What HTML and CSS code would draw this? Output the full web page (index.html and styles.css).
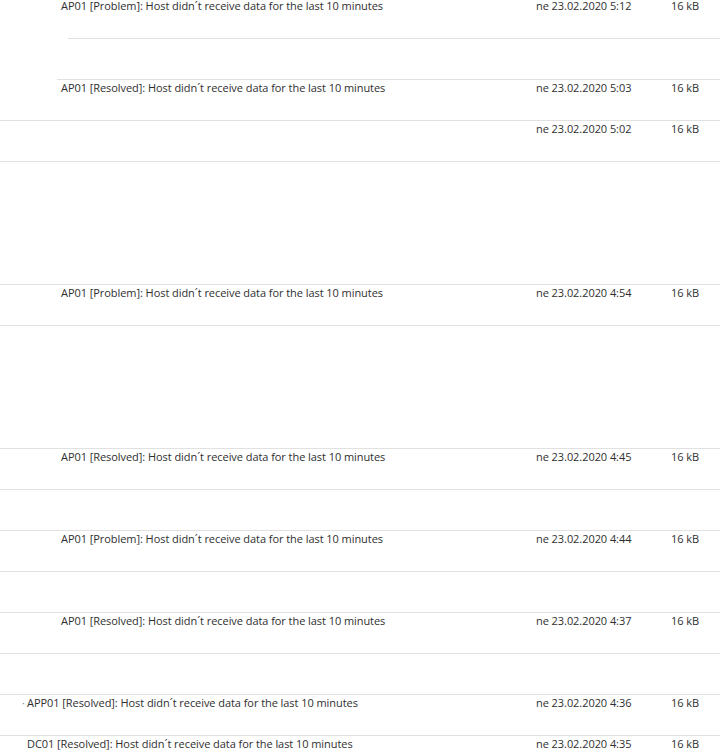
FILE: index.html
```html
<!DOCTYPE html>
<html>
<head>
<meta charset="utf-8">
<link rel="stylesheet" href="styles.css">
</head>
<body>
<div class="list">
  <div class="row first"><span class="subj">AP01 [Problem]: Host didn´t receive data for the last 10 minutes</span><span class="date">ne 23.02.2020 5:12</span><span class="size">16 kB</span></div>
  <div class="row ind68"></div>
  <div class="row ind57"><span class="subj">AP01 [Resolved]: Host didn´t receive data for the last 10 minutes</span><span class="date">ne 23.02.2020 5:03</span><span class="size">16 kB</span></div>
  <div class="row"><span class="subj"></span><span class="date">ne 23.02.2020 5:02</span><span class="size">16 kB</span></div>
  <div class="row"></div>
  <div class="row noline"></div>
  <div class="row noline"></div>
  <div class="row"><span class="subj">AP01 [Problem]: Host didn´t receive data for the last 10 minutes</span><span class="date">ne 23.02.2020 4:54</span><span class="size">16 kB</span></div>
  <div class="row"></div>
  <div class="row noline"></div>
  <div class="row noline"></div>
  <div class="row"><span class="subj">AP01 [Resolved]: Host didn´t receive data for the last 10 minutes</span><span class="date">ne 23.02.2020 4:45</span><span class="size">16 kB</span></div>
  <div class="row"></div>
  <div class="row"><span class="subj">AP01 [Problem]: Host didn´t receive data for the last 10 minutes</span><span class="date">ne 23.02.2020 4:44</span><span class="size">16 kB</span></div>
  <div class="row"></div>
  <div class="row"><span class="subj">AP01 [Resolved]: Host didn´t receive data for the last 10 minutes</span><span class="date">ne 23.02.2020 4:37</span><span class="size">16 kB</span></div>
  <div class="row"></div>
  <div class="row"><span class="subj wide"><span class="dot">·</span>APP01 [Resolved]: Host didn´t receive data for the last 10 minutes</span><span class="date">ne 23.02.2020 4:36</span><span class="size">16 kB</span></div>
  <div class="row"><span class="subj wide">DC01 [Resolved]: Host didn´t receive data for the last 10 minutes</span><span class="date">ne 23.02.2020 4:35</span><span class="size">16 kB</span></div>
</div>
</body>
</html>
```
FILE: styles.css
```css
html, body {
  margin: 0;
  padding: 0;
  background: #ffffff;
  overflow: hidden;
}
body {
  font-family: "Open Sans", "Noto Sans", "Liberation Sans", sans-serif;
  font-size: 11px;
  letter-spacing: -0.06px;
  color: #2f2f2f;
  height: 753px;
}
.row {
  display: grid;
  grid-template-columns: 475px 135px 1fr;
  height: 40px;
  line-height: 16px;
  padding-left: 61px;
  border-top: 1px solid #e1e1e1;
  white-space: nowrap;
}
.row.first {
  height: 38px;
  line-height: 12px;
  border-top: none;
}
.row.noline {
  border-top-color: transparent;
}
.row.ind68 {
  margin-left: 68px;
  padding-left: 0;
}
.row.ind57 {
  margin-left: 57px;
  padding-left: 4px;
}
.subj.wide {
  margin-left: -34px;
}
.dot {
  display: inline-block;
  width: 5px;
  margin-left: -5px;
  color: #8a8a8a;
}
```
